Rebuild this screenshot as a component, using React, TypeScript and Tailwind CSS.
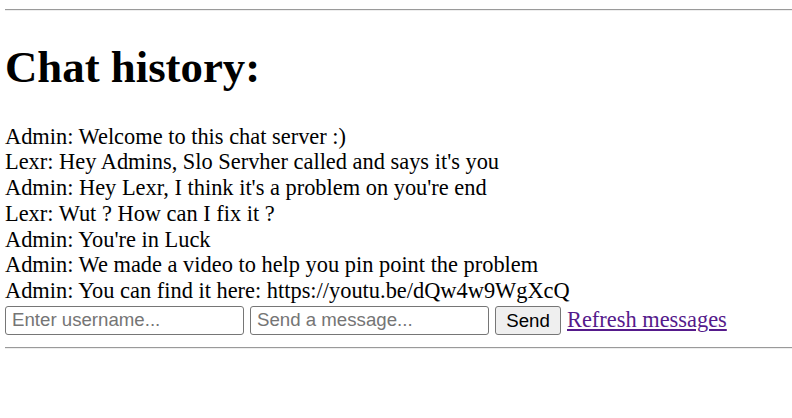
const messages = [
  "Admin: Welcome to this chat server :)",
  "Lexr: Hey Admins, Slo Servher called and says it's you",
  "Admin: Hey Lexr, I think it's a problem on you're end",
  "Lexr: Wut ? How can I fix it ?",
  "Admin: You're in Luck",
  "Admin: We made a video to help you pin point the problem",
  "Admin: You can find it here: https://youtu.be/dQw4w9WgXcQ",
];

function Rule() {
  return <div className="h-[2px] border-t border-t-[#9a9a9a] border-b border-b-[#eeeeee]" />;
}

export default function App() {
  return (
    <div className="min-h-[418px] bg-white pl-[5px] pt-[9px] text-black font-['Liberation_Serif','Times_New_Roman',serif] text-[22.4px]">
      <Rule />
      <h1 className="mt-[31px] mb-[30px] text-[44.8px] font-bold leading-[51.5px]">Chat history:</h1>
      <div className="leading-[25.76px]">
        {messages.map((m, i) => (
          <div key={i}>{m}</div>
        ))}
      </div>
      <div className="mt-[2px] flex items-center h-[29px]">
        <input
          placeholder="Enter username..."
          className="w-[239px] h-[29px] border border-[#767676] rounded-[3px] pl-[6px] font-['Liberation_Sans',Arial,sans-serif] text-[18.67px] placeholder:text-[#757575] outline-none"
        />
        <input
          placeholder="Send a message..."
          className="ml-[6px] w-[239px] h-[29px] border border-[#767676] rounded-[3px] pl-[6px] font-['Liberation_Sans',Arial,sans-serif] text-[18.67px] placeholder:text-[#757575] outline-none"
        />
        <button className="ml-[6px] w-[66px] h-[29px] bg-[#efefef] border border-[#767676] rounded-[3px] font-['Liberation_Sans',Arial,sans-serif] text-[18.67px] text-black">
          Send
        </button>
        <a href="#" className="ml-[6px] text-[#551a8b] underline leading-[25.76px]">
          Refresh messages
        </a>
      </div>
      <div className="mt-[12px]">
        <Rule />
      </div>
    </div>
  );
}
